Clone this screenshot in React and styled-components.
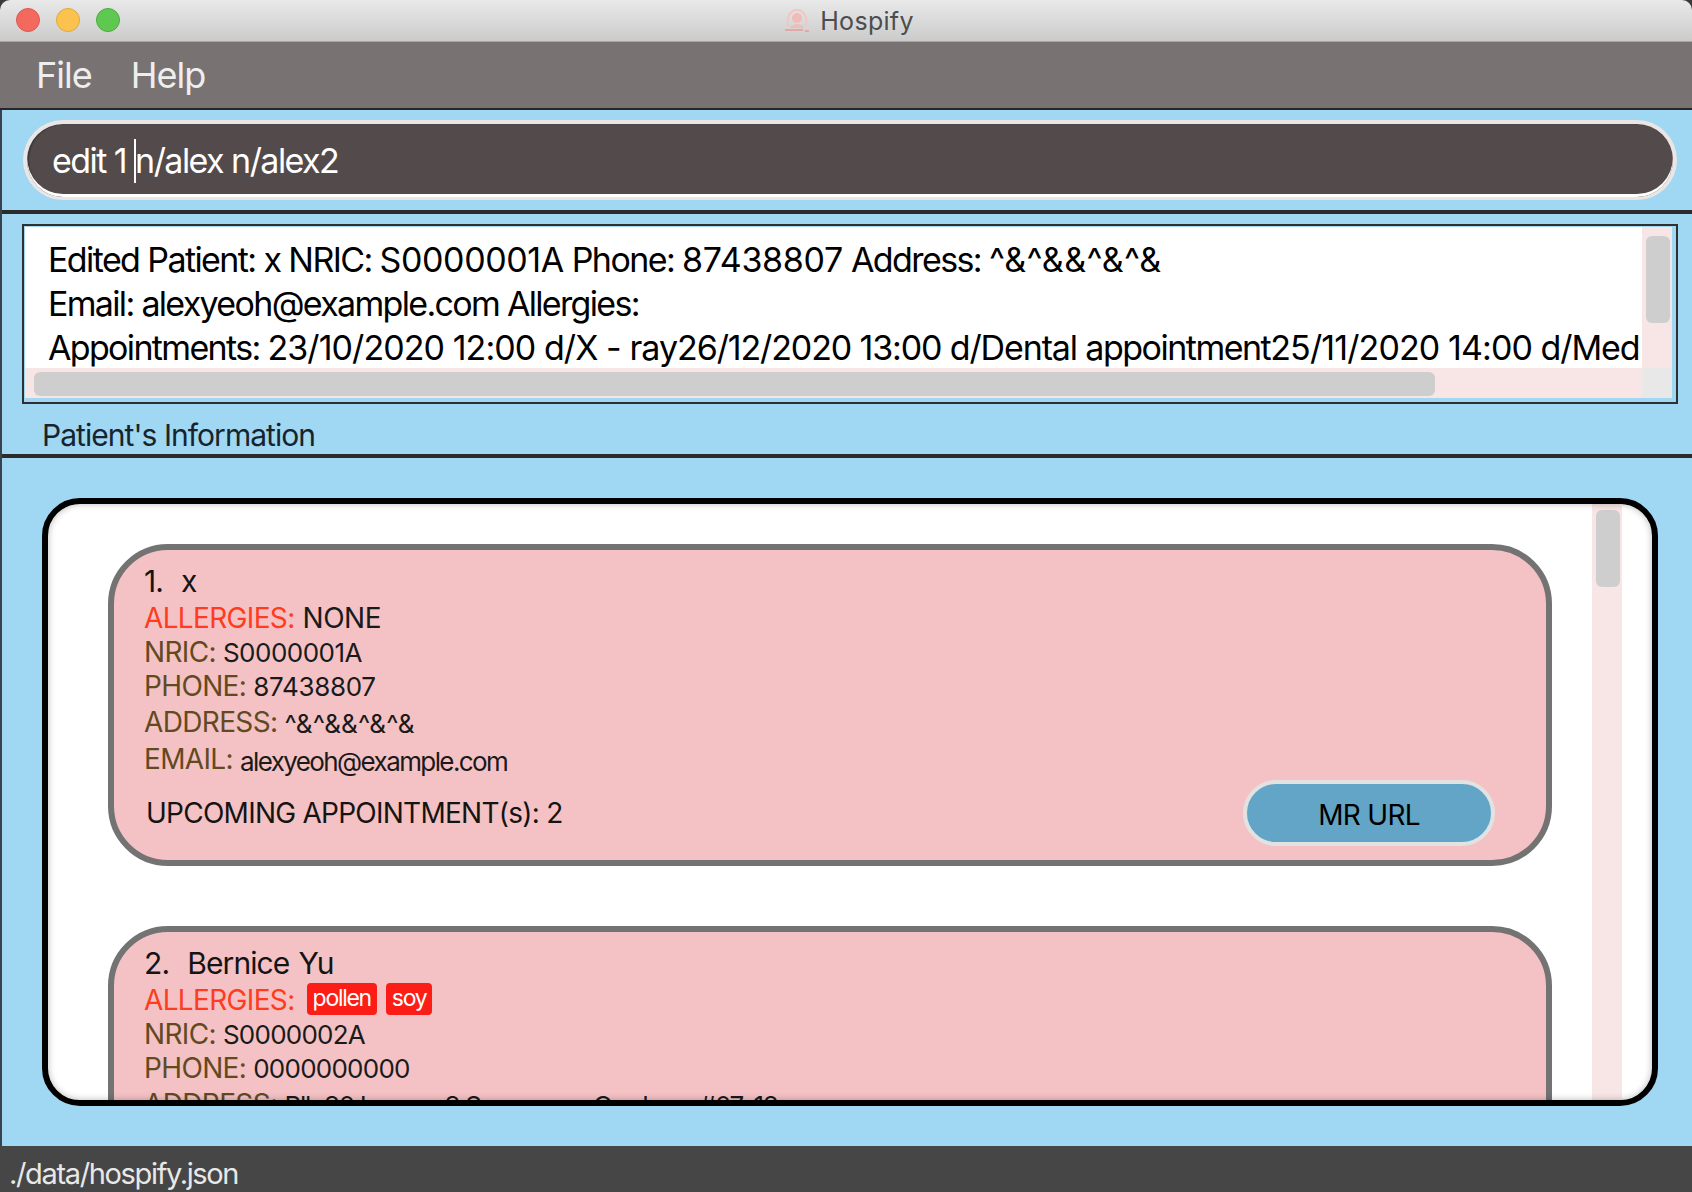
import React from 'react';
import styled, { createGlobalStyle } from 'styled-components';

const GlobalStyle = createGlobalStyle`
  html, body {
    margin: 0;
    padding: 0;
    background: #3a3a3a;
  }
  * {
    box-sizing: border-box;
  }
`;

const Page = styled.div`
  width: 1692px;
  height: 1192px;
  display: flex;
  flex-direction: column;
  overflow: hidden;
  font-family: Inter, "Liberation Sans", sans-serif;
  color: #000;
`;

const TitleBar = styled.div`
  height: 42px;
  flex: none;
  position: relative;
  display: flex;
  align-items: center;
  justify-content: center;
  background: linear-gradient(#e9e9e9, #cbcbcb);
  border-bottom: 1px solid #a9a7a6;
  border-radius: 10px 10px 0 0;
`;

const Lights = styled.div`
  position: absolute;
  left: 16px;
  top: 8px;
  display: flex;
  gap: 16px;
`;

const Light = styled.span`
  width: 24px;
  height: 24px;
  border-radius: 50%;
  background: ${({ $color }) => $color};
  border: 1px solid ${({ $edge }) => $edge};
`;

const TitleGroup = styled.div`
  display: flex;
  align-items: center;
  gap: 10px;
  margin-left: 6px;
`;

const TitleText = styled.span`
  font-size: 25px;
  color: #4d4d4d;
  letter-spacing: 0.3px;
`;

const MenuBar = styled.div`
  height: 68px;
  flex: none;
  display: flex;
  align-items: center;
  gap: 39px;
  padding: 0 0 0 36px;
  background: #787372;
  border-bottom: 2px solid #262626;
`;

const MenuItem = styled.span`
  font-size: 36px;
  color: #eeeeee;
  letter-spacing: -1px;
`;

const Main = styled.div`
  flex: 1;
  display: flex;
  flex-direction: column;
  min-height: 0;
  background: #a0d7f3;
  border-left: 2px solid #37444d;
`;

const CommandArea = styled.div`
  height: 100px;
  flex: none;
  padding: 10px 15px 10px 21px;
`;

const CommandBox = styled.div`
  height: 80px;
  display: flex;
  align-items: center;
  padding-left: 25px;
  border-radius: 40px;
  background: #534a4b;
  border: 4px solid #ebe6e6;
  border-bottom-width: 3px;
  box-shadow: inset 0 -3px 0 #ffffff, inset 2px 0 1px #3a3a3a;
  color: #ffffff;
  font-size: 34px;
  letter-spacing: -1.55px;
  white-space: pre;
`;

const Caret = styled.span`
  display: inline-block;
  width: 2px;
  height: 44px;
  margin-right: -1px;
  background: #ffffff;
`;

const Divider = styled.div`
  height: 4px;
  flex: none;
  background: #2b2b2b;
`;

const ResultArea = styled.div`
  height: 190px;
  flex: none;
  padding: 10px 14px 0 20px;
`;

const ResultBox = styled.div`
  height: 180px;
  padding: 1px 4px 4px 1px;
  border: 2px solid #303030;
  display: grid;
  grid-template-columns: 1fr 30px;
  grid-template-rows: 1fr 30px;
`;

const ResultText = styled.div`
  background: #ffffff;
  padding: 11px 0 0 23px;
  overflow: hidden;
  min-width: 0;
`;

const ResultLine = styled.div`
  height: 44px;
  line-height: 44px;
  font-size: 34px;
  letter-spacing: ${({ $spacing }) => $spacing};
  white-space: pre;
`;

const Tracked = styled.span`
  letter-spacing: ${({ $s }) => $s};
`;

const ScrollTrack = styled.div`
  background: #f8e6e6;
  display: flex;
`;

const VerticalTrack = styled(ScrollTrack)`
  padding: 9px 2px 0 4px;
`;

const HorizontalTrack = styled(ScrollTrack)`
  padding: 4px 0 2px 9px;
`;

const ScrollCorner = styled.div`
  background: #e8e8e8;
`;

const Thumb = styled.div`
  background: #cecece;
  border-radius: 6px;
  width: ${({ $w }) => $w};
  height: ${({ $h }) => $h};
`;

const SectionLabel = styled.div`
  height: 50px;
  flex: none;
  padding: 13px 0 0 40px;
  line-height: 36px;
  font-size: 30px;
  letter-spacing: -0.95px;
  color: #17242d;
`;

const ListArea = styled.div`
  height: 688px;
  flex: none;
  padding: 40px 34px 40px 40px;
`;

const ListBox = styled.div`
  height: 608px;
  display: flex;
  border: 6px solid #000000;
  border-radius: 38px;
  background: #ffffff;
  overflow: hidden;
  position: relative;

  &::after {
    content: '';
    position: absolute;
    inset: 0;
    border-radius: 32px;
    box-shadow: inset 0 0 7px rgba(0, 0, 0, 0.28);
    pointer-events: none;
  }
`;

const Cards = styled.div`
  width: 1544px;
  flex: none;
  padding: 40px 40px 0 60px;
`;

const ListTrack = styled(ScrollTrack)`
  width: 30px;
  flex: none;
  padding: 6px 2px 0 4px;
`;

const Card = styled.div`
  border: 6px solid #737373;
  border-radius: 60px;
  background: #f4c2c4;
  padding: 13px 51px 14px 30px;
  margin-bottom: 60px;
`;

const NameRow = styled.div`
  height: 38px;
  line-height: 36px;
  font-size: 30px;
  letter-spacing: -0.9px;
  word-spacing: 1.5px;
  color: #141414;
  white-space: pre;
`;

const Row = styled.div`
  height: 34px;
  line-height: 34px;
  white-space: nowrap;
  margin-top: ${({ $top }) => $top || '0'};
`;

const AllergyRow = styled.div`
  height: 34px;
  line-height: 34px;
  display: flex;
  align-items: baseline;
  gap: ${({ $gap }) => $gap};
  white-space: nowrap;
`;

const Label = styled.span`
  font-size: 28px;
  letter-spacing: -0.65px;
  color: #624a1f;
`;

const AllergyLabel = styled(Label)`
  color: #ff3b20;
`;

const Value = styled.span`
  margin-left: 7px;
  font-size: 26px;
  letter-spacing: ${({ $spacing }) => $spacing};
  vertical-align: ${({ $drop }) => $drop || 'baseline'};
  color: #1a1a1a;
`;

const NoneValue = styled.span`
  font-size: 28px;
  letter-spacing: -0.5px;
  color: #1a1a1a;
`;

const Tags = styled.div`
  display: flex;
  gap: 9px;
  align-self: flex-start;
`;

const Tag = styled.span`
  height: 32px;
  line-height: 31px;
  padding: 0 6px;
  border-radius: 4px;
  background: #fd1d17;
  color: #ffffff;
  font-size: 23px;
  letter-spacing: -1.3px;
`;

const BottomRow = styled.div`
  display: flex;
  align-items: center;
  justify-content: space-between;
  margin-top: 4px;
`;

const Upcoming = styled.span`
  margin-left: 2px;
  font-size: 28px;
  letter-spacing: -0.75px;
  color: #141414;
`;

const UrlButton = styled.button`
  width: 252px;
  height: 66px;
  padding: 3px 0 0;
  border: 4px solid #e2e2e2;
  border-radius: 33px;
  background: #62a5c6;
  color: #000000;
  font-family: inherit;
  font-size: 28px;
  letter-spacing: -0.7px;
`;

const StatusBar = styled.div`
  height: 46px;
  flex: none;
  padding: 6px 0 0 9px;
  line-height: 44px;
  background: #464646;
  color: #e8e8e8;
  font-size: 29px;
  letter-spacing: -1.35px;
`;

const HospifyIcon = () => (
  <svg width="26" height="26" viewBox="0 0 26 26" fill="none">
    <path d="M4 18 C2 8 7 2 13 2 C19 2 24 8 22 18" stroke="#f3c4c0" strokeWidth="2" />
    <circle cx="13" cy="10" r="5" fill="#f0bcb8" />
    <path d="M6 20 C7 15 19 15 20 20 Z" fill="#f0bcb8" />
    <path d="M1 22 H19 M21 23 H25" stroke="#e79a96" strokeWidth="1.5" />
  </svg>
);

const patients = [
  {
    name: '1.  x',
    allergies: [],
    nric: 'S0000001A',
    phone: '87438807',
    address: '^&^&&^&^&',
    email: 'alexyeoh@example.com',
    appointments: 2,
    tracking: { nric: '-0.5px', phone: '-0.3px', address: '0.1px', email: '-1.6px' },
  },
  {
    name: '2.  Bernice Yu',
    allergies: ['pollen', 'soy'],
    nric: 'S0000002A',
    phone: '0000000000',
    address: 'Blk 30 Lorong 3 Serangoon Gardens, #07-18',
    email: 'berniceyu@example.com',
    appointments: 0,
    tracking: { nric: '-0.75px', phone: '-0.75px', address: '-1.32px', email: '-1.6px' },
  },
];

const PatientCard = ({ patient }) => (
  <Card>
    <NameRow>{patient.name}</NameRow>
    <AllergyRow $gap={patient.allergies.length === 0 ? '8px' : '12px'}>
      <AllergyLabel>ALLERGIES:</AllergyLabel>
      {patient.allergies.length === 0 ? (
        <NoneValue>NONE</NoneValue>
      ) : (
        <Tags>
          {patient.allergies.map((a) => (
            <Tag key={a}>{a}</Tag>
          ))}
        </Tags>
      )}
    </AllergyRow>
    <Row>
      <Label>NRIC:</Label>
      <Value $spacing={patient.tracking.nric}>{patient.nric}</Value>
    </Row>
    <Row>
      <Label>PHONE:</Label>
      <Value $spacing={patient.tracking.phone}>{patient.phone}</Value>
    </Row>
    <Row $top="2px">
      <Label>ADDRESS:</Label>
      <Value $spacing={patient.tracking.address} $drop="-1px">{patient.address}</Value>
    </Row>
    <Row $top="3px">
      <Label>EMAIL:</Label>
      <Value $spacing={patient.tracking.email} $drop="-2px">{patient.email}</Value>
    </Row>
    <BottomRow>
      <Upcoming>UPCOMING APPOINTMENT(s): {patient.appointments}</Upcoming>
      <UrlButton>MR URL</UrlButton>
    </BottomRow>
  </Card>
);

const App = () => (
  <Page>
    <GlobalStyle />
    <TitleBar>
      <Lights>
        <Light $color="#f4695e" $edge="#dd5a50" />
        <Light $color="#fbc34e" $edge="#e0a83c" />
        <Light $color="#5fc850" $edge="#4aad3f" />
      </Lights>
      <TitleGroup>
        <HospifyIcon />
        <TitleText>Hospify</TitleText>
      </TitleGroup>
    </TitleBar>
    <MenuBar>
      <MenuItem>File</MenuItem>
      <MenuItem>Help</MenuItem>
    </MenuBar>
    <Main>
      <CommandArea>
        <CommandBox>
          edit 1 <Caret />n/alex n/alex2
        </CommandBox>
      </CommandArea>
      <Divider />
      <ResultArea>
        <ResultBox>
          <ResultText>
            <ResultLine $spacing="-1.6px">
              Edited Patient: x NRIC: <Tracked $s="-0.4px">S0000001A</Tracked> Phone: <Tracked $s="-0.3px">87438807</Tracked> Address: <Tracked $s="0.4px">^&amp;^&amp;&amp;^&amp;^&amp;</Tracked>
            </ResultLine>
            <ResultLine $spacing="-1.68px">Email: alexyeoh@example.com Allergies:</ResultLine>
            <ResultLine $spacing="-1.13px">
              <Tracked $s="-1.66px">Appointments: </Tracked>
              <Tracked $s="-0.93px">23/10/2020 12:00 d/X - ray</Tracked>
              26/12/2020 13:00 d/Dental <Tracked $s="-1.5px">appointment</Tracked>
              <Tracked $s="-0.88px">25/11/2020 14:00</Tracked> d/Med
            </ResultLine>
          </ResultText>
          <VerticalTrack>
            <Thumb $w="24px" $h="87px" />
          </VerticalTrack>
          <HorizontalTrack>
            <Thumb $w="1401px" $h="24px" />
          </HorizontalTrack>
          <ScrollCorner />
        </ResultBox>
      </ResultArea>
      <SectionLabel>Patient's Information</SectionLabel>
      <Divider />
      <ListArea>
        <ListBox>
          <Cards>
            {patients.map((p) => (
              <PatientCard key={p.nric} patient={p} />
            ))}
          </Cards>
          <ListTrack>
            <Thumb $w="24px" $h="77px" />
          </ListTrack>
        </ListBox>
      </ListArea>
    </Main>
    <StatusBar>./data/hospify.json</StatusBar>
  </Page>
);

export default App;
